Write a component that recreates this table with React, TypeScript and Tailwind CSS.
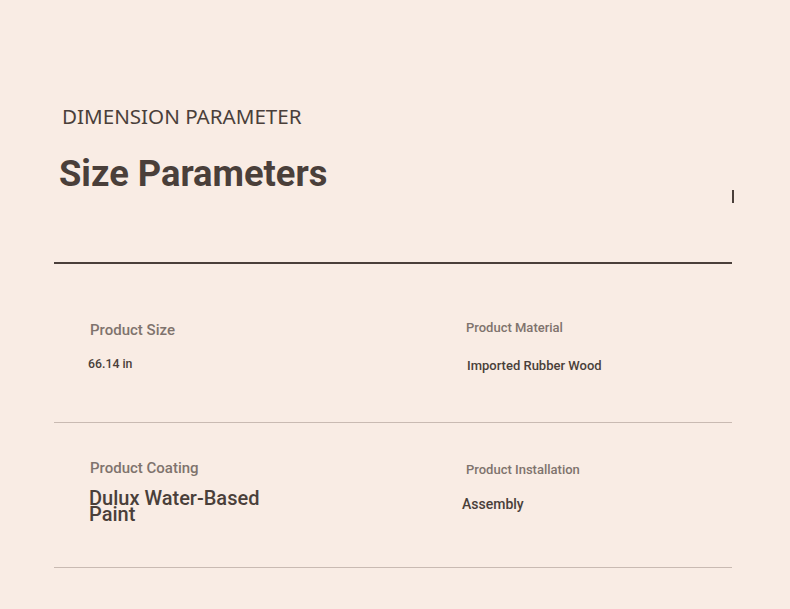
import React from "react";

const roboto = { fontFamily: "Roboto, 'Liberation Sans', sans-serif" };

export default function App() {
  return (
    <div className="min-h-[609px] w-full bg-[#f9ece4] pt-[102px] text-[#4a3f3a]" style={roboto}>
      <div className="ml-[54px] w-[678px]">
        <div className="relative border-b-2 border-[#4a3f3a] pb-[68px]">
          <div
            className="ml-[8px] text-[20.6px] leading-[28px]"
            style={{ fontFamily: "'Noto Sans', 'Open Sans', sans-serif" }}
          >
            DIMENSION PARAMETER
          </div>
          <h1 className="ml-[5px] mt-[24px] text-[36.3px] font-bold leading-[40px]">Size Parameters</h1>
          <div className="absolute right-[-2px] top-[88px] h-[13px] w-[2px] bg-[#4a3f3a]" />
        </div>

        <div className="grid h-[159px] grid-cols-[411px_1fr] border-b border-[#c9bab2]">
          <div className="pl-[34px] pt-[56px]">
            <div className="ml-[2px] text-[15px] font-medium leading-[20px] text-[#7f736d]">Product Size</div>
            <div className="mt-[16px] text-[12.3px] font-medium leading-[16px]">66.14 in</div>
          </div>
          <div className="pt-[55px]">
            <div className="ml-[1px] text-[13px] font-medium leading-[18px] text-[#7f736d]">Product Material</div>
            <div className="ml-[2px] mt-[20px] text-[13px] font-medium leading-[18px]">Imported Rubber Wood</div>
          </div>
        </div>

        <div className="grid h-[145px] grid-cols-[411px_1fr] border-b border-[#c9bab2]">
          <div className="pl-[35px] pt-[35px]">
            <div className="ml-[1px] text-[15px] font-medium leading-[20px] text-[#7f736d]">Product Coating</div>
            <div className="mt-[12px] w-[200px] text-[20px] font-medium leading-[16px]">Dulux Water-Based Paint</div>
          </div>
          <div className="pt-[38px]">
            <div className="ml-[1px] text-[13px] font-medium leading-[18px] text-[#7f736d]">Product Installation</div>
            <div className="-ml-[3px] mt-[15px] text-[14px] font-medium leading-[20px]">Assembly</div>
          </div>
        </div>
      </div>
    </div>
  );
}
